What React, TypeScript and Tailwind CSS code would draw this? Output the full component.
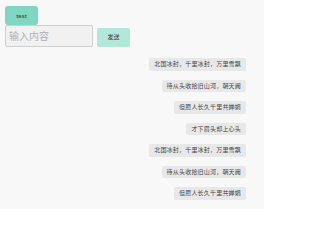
const messages = [
  "北国冰封，千里冰封，万里雪飘",
  "待从头收拾旧山河，朝天阙",
  "但愿人长久千里共婵娟",
  "才下眉头却上心头",
  "北国冰封，千里冰封，万里雪飘",
  "待从头收拾旧山河，朝天阙",
  "但愿人长久千里共婵娟",
  "才下眉头却上心头",
];

export default function App() {
  return (
    <div
      className="w-[264px] h-[209px] overflow-hidden bg-[#f8f8f8]"
      style={{ fontFamily: '"Noto Sans", "Noto Sans CJK SC", sans-serif' }}
    >
      <div className="flex flex-col items-start pl-[5px] pt-[6px]">
        <button className="block w-[33px] h-[19px] rounded-[3px] bg-[#7fd7c1] text-[6px] text-[#333] leading-none">
          test
        </button>
        <div className="flex items-center gap-[4px]">
          <input
            className="block w-[88px] h-[22px] border border-[#cfcfcf] rounded-[2px] bg-[#f1f1f1] px-[3px] text-[10px] placeholder:text-[#b0b0b0] outline-none"
            placeholder="输入内容"
          />
          <button className="block mt-[2px] w-[33px] h-[19px] rounded-[2px] bg-[#b2e8da] text-[6px] text-[#333] leading-none">
            发送
          </button>
        </div>
      </div>
      <div className="flex flex-col items-end gap-[9px] pr-[18px] pt-[11px]">
        {messages.map((m, i) => (
          <div
            key={i}
            className="h-[12.5px] flex items-center rounded-[2px] bg-[#e8e8e8] px-[5px] text-[6px] tracking-[0.2px] text-[#444] leading-none whitespace-nowrap"
          >
            {m}
          </div>
        ))}
      </div>
    </div>
  );
}
